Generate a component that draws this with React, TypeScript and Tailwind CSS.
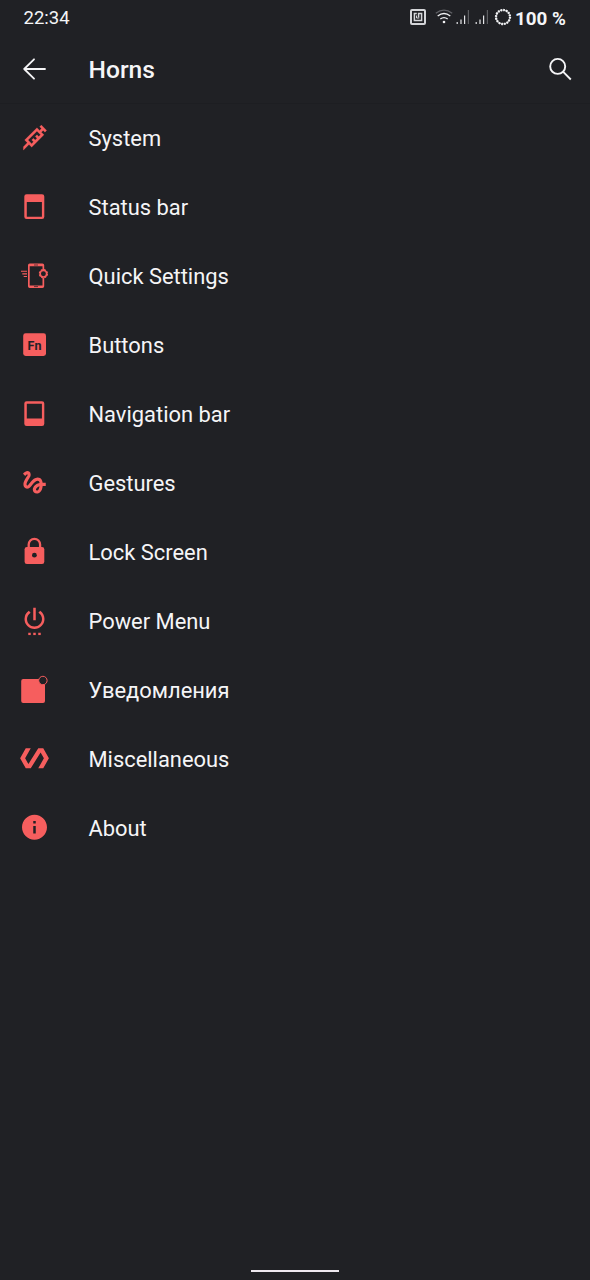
import type { ReactNode } from "react";
import { MdGesture, MdInfo, MdPolymer, MdSettingsPower } from "react-icons/md";

const iconClass = "block size-[30px] shrink-0 text-[#f65e5e]";
const materialClass = "block size-[30px] shrink-0 translate-x-[0.5px] translate-y-[-0.7px] text-[#f65e5e]";

function Glyph({ children }: { children: ReactNode }) {
  return (
    <svg viewBox="0 0 30 30" className={iconClass} fill="currentColor">
      {children}
    </svg>
  );
}

const items: { label: string; icon: ReactNode }[] = [
  {
    label: "System",
    icon: (
      <svg viewBox="0 0 24 24" className={iconClass} fill="currentColor">
        <path
          transform="translate(.4 -.1)"
          stroke="currentColor"
          strokeWidth="0.15"
          d="M11.15 15.18L9.73 13.77L11.15 12.35L12.56 13.77L13.97 12.35L12.56 10.94L13.97 9.53L15.39 10.94L16.8 9.53L13.97 6.7L6.9 13.77L9.73 16.6L11.15 15.18M3.08 19L6.2 15.89L4.08 13.77L13.97 3.87L16.1 6L17.5 4.58L16.1 3.16L17.5 1.75L21.75 6L20.34 7.4L18.92 6L17.5 7.4L19.63 9.53L9.73 19.42L7.61 17.3L3.08 21.83V19Z"
        />
      </svg>
    ),
  },
  {
    label: "Status bar",
    icon: (
      <Glyph>
        <path
          fillRule="evenodd"
          d="M7.6 2.3H23a2.3 2.3 0 0 1 2.3 2.3V24.8a2.3 2.3 0 0 1-2.3 2.3H7.6a2.3 2.3 0 0 1-2.3-2.3V4.6a2.3 2.3 0 0 1 2.3-2.3ZM7.8 9.9V24.7H22.9V9.9Z"
        />
      </Glyph>
    ),
  },
  {
    label: "Quick Settings",
    icon: (
      <Glyph>
        <path
          fillRule="evenodd"
          d="M10.7 2.5H23.5a1.7 1.7 0 0 1 1.7 1.7V9H23.5V5.2H10.7V24.4H23.5V17H25.2V25.2a1.7 1.7 0 0 1-1.7 1.7H10.7A1.7 1.7 0 0 1 9 25.2V4.2a1.7 1.7 0 0 1 1.7-1.7Z"
        />
        <path d="M15 4h4M15 25.6h4" stroke="#202125" strokeWidth="0.7" />
        <path d="M2 10.3H8M3.3 12.9H8M4.7 15.5H8" stroke="currentColor" strokeWidth="1.1" />
        <circle cx="24.4" cy="12.7" r="4" fill="none" stroke="currentColor" strokeWidth="1.3" strokeDasharray="2 1.14" />
        <circle cx="24.4" cy="12.7" r="3.2" fill="#202125" stroke="currentColor" strokeWidth="1.5" />
      </Glyph>
    ),
  },
  {
    label: "Buttons",
    icon: (
      <Glyph>
        <rect x="4.2" y="3.3" width="22.8" height="22.6" rx="2.4" />
        <text
          x="15.5"
          y="19.9"
          textAnchor="middle"
          fill="#202125"
          className="font-['Roboto',sans-serif] text-[12.5px] font-bold"
        >
          Fn
        </text>
      </Glyph>
    ),
  },
  {
    label: "Navigation bar",
    icon: (
      <Glyph>
        <path
          fillRule="evenodd"
          d="M7.6 2.3H23a2.3 2.3 0 0 1 2.3 2.3V24.8a2.3 2.3 0 0 1-2.3 2.3H7.6a2.3 2.3 0 0 1-2.3-2.3V4.6a2.3 2.3 0 0 1 2.3-2.3ZM7.8 4.8V19.6H22.9V4.8Z"
        />
      </Glyph>
    ),
  },
  { label: "Gestures", icon: <MdGesture className={materialClass} /> },
  {
    label: "Lock Screen",
    icon: (
      <Glyph>
        <path d="M9.7 11V7.5a5.7 5.7 0 0 1 11.4 0V11" fill="none" stroke="currentColor" strokeWidth="2.3" />
        <rect x="5.6" y="9.9" width="19.7" height="17.2" rx="2.3" />
        <circle cx="15.4" cy="18.2" r="2.4" fill="#202125" />
      </Glyph>
    ),
  },
  { label: "Power Menu", icon: <MdSettingsPower className={materialClass} /> },
  {
    label: "Уведомления",
    icon: (
      <Glyph>
        <rect x="2.2" y="4" width="23.8" height="24" rx="2" />
        <circle cx="23.9" cy="5.5" r="4.2" fill="#202125" stroke="currentColor" strokeWidth="1" />
      </Glyph>
    ),
  },
  { label: "Miscellaneous", icon: <MdPolymer className={materialClass} /> },
  { label: "About", icon: <MdInfo className={materialClass} /> },
];

function Signal() {
  return (
    <svg viewBox="0 0 14 16" className="block h-4 w-3.5" fill="none" strokeWidth="1.2">
      <path d="M1.2 13V15M5 10.5V15M8.6 6.5V15" stroke="#e4e5e8" />
      <path d="M12.4 1V15" stroke="#5d5e62" />
    </svg>
  );
}

function StatusBar() {
  return (
    <div className="flex h-[35px] items-center pl-[23.5px] pr-[23px] text-[18.5px] text-[#f4f5f7]">
      <span className="mt-[3px]">22:34</span>
      <div className="ml-auto flex items-center">
        <svg viewBox="0 0 16 16" className="-mt-px block size-4" fill="none">
          <rect x="1" y="1" width="14" height="14" rx="1" stroke="#d4d5d8" strokeWidth="2" />
          <path d="M6.8 4.4H4.4V11.6H11.6V4.4H8.6V8.5" stroke="#d4d5d8" strokeWidth="1.5" />
          <path d="M6.5 6.5V9H9.3" stroke="#d4d5d8" strokeWidth="1" />
        </svg>
        <svg viewBox="0 0 18 16" className="-mt-px ml-[9px] block h-4 w-[18px]" fill="none" strokeWidth="1.3">
          <path d="M.8 4.2Q9-1.8 17.2 4.2" stroke="#606166" />
          <path d="M2.7 7Q9 2 15.3 7M5.3 10Q9 7.2 12.7 10" stroke="#f1f2f4" />
          <circle cx="9" cy="13" r="1.3" fill="#f1f2f4" />
        </svg>
        <span className="-mt-px ml-[3px]"><Signal /></span>
        <span className="-mt-px ml-[5px]"><Signal /></span>
        <svg viewBox="0 0 18 18" className="-mt-px ml-[5px] block size-[18px]" fill="none">
          <circle cx="9" cy="9" r="7" stroke="#b8b9bc" strokeWidth="1.2" />
          <circle cx="9" cy="9" r="7" stroke="#f4f5f7" strokeWidth="2.3" strokeDasharray="1.65 1.1" />
        </svg>
        <span className="ml-[3px] mt-[3px] w-[52px] whitespace-nowrap text-[18.8px] font-bold">100 %</span>
      </div>
    </div>
  );
}

export default function App() {
  return (
    <main className="flex h-[1280px] w-[590px] flex-col bg-[#202125] font-['Roboto',sans-serif] text-[#f5f5f7]">
      <StatusBar />
      <header className="flex h-[69px] items-center border-b border-[#1d1e22] pl-[23px] pr-[18px]">
        <svg viewBox="0 0 23 22" className="block h-[22px] w-[23px]" fill="none" stroke="#f5f5f7" strokeWidth="1.8" strokeLinecap="round" strokeLinejoin="round">
          <path d="M11 1.3L1.2 11L11 20.7M1.2 11H22" />
        </svg>
        <h1 className="ml-[42.5px] mt-[3px] text-[24.6px] font-medium">Horns</h1>
        <svg viewBox="0 0 24 24" className="-mt-px ml-auto block size-6" fill="none" stroke="#f5f5f7" strokeWidth="1.9">
          <circle cx="9.7" cy="9.4" r="7.5" />
          <path d="M15 14.7L22.8 22.5" />
        </svg>
      </header>
      <nav className="flex flex-col">
        {items.map(({ label, icon }) => (
          <div key={label} className="flex h-[69px] items-center pl-[19px]">
            <span className="-mt-px">{icon}</span>
            <span className="ml-[39.5px] mt-[2px] text-[21.9px]">{label}</span>
          </div>
        ))}
      </nav>
      <div className="mb-2 mt-auto h-[2.5px] w-[88px] self-center bg-[#eee8ef]" />
    </main>
  );
}
